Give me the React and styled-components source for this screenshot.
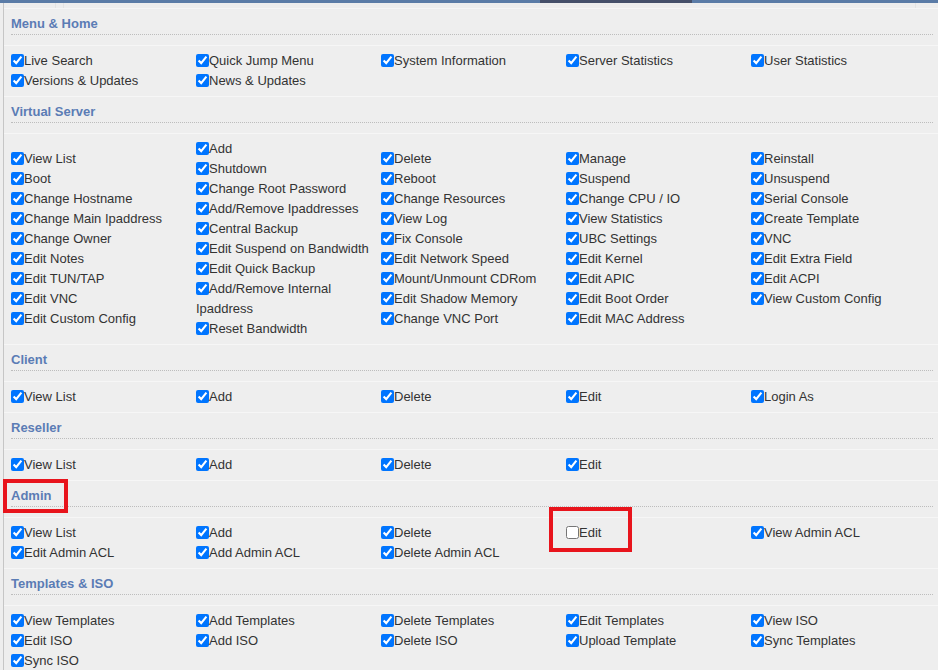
import React from 'react';
import styled, { createGlobalStyle } from 'styled-components';

const GlobalStyle = createGlobalStyle`
  html, body { margin: 0; padding: 0; background: #eeeeee; }
  body { font-family: "Liberation Sans", Arial, sans-serif; font-size: 13px; color: #333333; }
`;

const Page = styled.div`
  width: 938px;
  height: 670px;
  overflow: hidden;
  background: #eeeeee;
`;

const TopStrip = styled.div`
  height: 3px;
  background: linear-gradient(to right,
    #5b7ca7 0px, #5b7ca7 540px,
    #46506a 540px, #46506a 692px,
    #5b7ca7 692px, #5b7ca7 100%);
`;

const Table = styled.div`
  margin-left: 3px;
  border-left: 1px solid #c6c6c6;
`;

const StubRow = styled.div`
  height: 5px;
  display: grid;
  grid-template-columns: 51px 8px 852px 1fr;
  & > span + span { border-left: 1px solid #e4e4e4; }
`;

const Row = styled.div`
  position: relative;
  border-top: 1px solid #f6f6f6;
`;

const HeaderRow = styled(Row)`
  padding: 7px 5px 10px 7px;
`;

const Title = styled.div`
  font-weight: bold;
  font-size: 13px;
  line-height: 16px;
  color: #5b7cb5;
  padding-bottom: 2px;
  border-bottom: 1px dotted #bdbdbd;
`;

const ContentRow = styled(Row)`
  padding: 5px 0 5px 7px;
  display: grid;
  grid-template-columns: repeat(5, 185px);
  align-items: center;
`;

const Cell = styled.div`
  min-height: ${(p) => p.$lines * 20}px;
  padding-right: 5px;
`;

const Item = styled.label`
  position: relative;
  display: block;
  line-height: 20px;
  white-space: normal;
`;

const Check = styled.input.attrs({ type: 'checkbox' })`
  margin: 0;
  width: 13px;
  height: 13px;
  vertical-align: -2px;
`;

const RedBox = styled.div`
  position: absolute;
  border: 4px solid #e8141c;
  box-sizing: border-box;
  pointer-events: none;
`;

const sections = [
  {
    title: 'Menu & Home',
    cols: [
      ['Live Search', 'Versions & Updates'],
      ['Quick Jump Menu', 'News & Updates'],
      ['System Information'],
      ['Server Statistics'],
      ['User Statistics'],
    ],
  },
  {
    title: 'Virtual Server',
    cols: [
      ['View List', 'Boot', 'Change Hostname', 'Change Main Ipaddress', 'Change Owner', 'Edit Notes', 'Edit TUN/TAP', 'Edit VNC', 'Edit Custom Config'],
      ['Add', 'Shutdown', 'Change Root Password', 'Add/Remove Ipaddresses', 'Central Backup', 'Edit Suspend on Bandwidth', 'Edit Quick Backup', 'Add/Remove Internal Ipaddress', 'Reset Bandwidth'],
      ['Delete', 'Reboot', 'Change Resources', 'View Log', 'Fix Console', 'Edit Network Speed', 'Mount/Unmount CDRom', 'Edit Shadow Memory', 'Change VNC Port'],
      ['Manage', 'Suspend', 'Change CPU / IO', 'View Statistics', 'UBC Settings', 'Edit Kernel', 'Edit APIC', 'Edit Boot Order', 'Edit MAC Address'],
      ['Reinstall', 'Unsuspend', 'Serial Console', 'Create Template', 'VNC', 'Edit Extra Field', 'Edit ACPI', 'View Custom Config'],
    ],
  },
  {
    title: 'Client',
    cols: [['View List'], ['Add'], ['Delete'], ['Edit'], ['Login As']],
  },
  {
    title: 'Reseller',
    cols: [['View List'], ['Add'], ['Delete'], ['Edit'], []],
  },
  {
    title: 'Admin',
    highlight: true,
    cols: [
      ['View List', 'Edit Admin ACL'],
      ['Add', 'Add Admin ACL'],
      ['Delete', 'Delete Admin ACL'],
      [{ label: 'Edit', unchecked: true, highlight: true }],
      ['View Admin ACL'],
    ],
  },
  {
    title: 'Templates & ISO',
    cols: [
      ['View Templates', 'Edit ISO', 'Sync ISO'],
      ['Add Templates', 'Add ISO'],
      ['Delete Templates', 'Delete ISO'],
      ['Edit Templates', 'Upload Template'],
      ['View ISO', 'Sync Templates'],
    ],
  },
];

function Permission({ entry }) {
  const data = typeof entry === 'string' ? { label: entry } : entry;
  return (
    <Item>
      <Check defaultChecked={!data.unchecked} />
      {data.label}
      {data.highlight && (
        <RedBox style={{ left: -17, top: -16, width: 83, height: 45 }} />
      )}
    </Item>
  );
}

function Section({ section }) {
  const lines = Math.max(...section.cols.map((c) => c.length));
  return (
    <>
      <HeaderRow>
        <Title>{section.title}</Title>
        {section.highlight && (
          <RedBox style={{ left: -1, top: -2, width: 65, height: 34 }} />
        )}
      </HeaderRow>
      <ContentRow>
        {section.cols.map((col, i) => (
          <Cell key={i} $lines={lines}>
            {col.map((entry, j) => (
              <Permission key={j} entry={entry} />
            ))}
          </Cell>
        ))}
      </ContentRow>
    </>
  );
}

export default function App() {
  return (
    <Page>
      <GlobalStyle />
      <TopStrip />
      <Table>
        <StubRow>
          <span />
          <span />
          <span />
          <span />
        </StubRow>
        {sections.map((s) => (
          <Section key={s.title} section={s} />
        ))}
      </Table>
    </Page>
  );
}
